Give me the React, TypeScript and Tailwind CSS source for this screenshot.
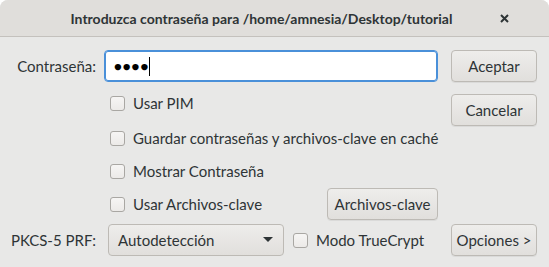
const font = { fontFamily: 'Lato, "Noto Sans", sans-serif' };

const Btn = ({ label, className = "" }: { label: string; className?: string }) => (
  <div
    className={`flex h-8 items-center justify-center whitespace-nowrap rounded-[4px] border border-[#bdbab5] bg-gradient-to-b from-[#eeedeb] to-[#e1dfdc] text-[15px] text-[#2e3436] shadow-[0_1px_0_rgba(0,0,0,0.06)] ${className}`}
  >
    {label}
  </div>
);

const Check = ({ label }: { label: string }) => (
  <div className="flex items-center gap-2 whitespace-nowrap text-[15px] text-[#2e3436]">
    <div className="h-[15px] w-[15px] shrink-0 rounded-[3px] border border-[#a9a7a3] bg-gradient-to-b from-[#f6f5f4] to-[#eceae8]" />
    <span>{label}</span>
  </div>
);

export default function App() {
  return (
    <div className="h-[267px] w-[549px] bg-white" style={font}>
      <div className="flex h-full flex-col overflow-hidden rounded-t-[8px] bg-[#e8e8e7]">
        {/* title bar */}
        <div className="relative flex h-[37px] shrink-0 items-center justify-center border-b border-[#c4c1bd] bg-[#e0dedb] pr-[26px]">
          <span className="whitespace-nowrap text-[14px] font-bold text-[#2e3436]">
            Introduzca contraseña para /home/amnesia/Desktop/tutorial
          </span>
          <svg className="absolute right-[40px] top-[14px]" width="9" height="9" viewBox="0 0 9 9">
            <path d="M1 1L8 8M8 1L1 8" stroke="#2e3436" strokeWidth="2" />
          </svg>
        </div>

        <div className="flex flex-1 gap-[13px] pl-[12px] pr-[12px] pt-[13px]">
          {/* left */}
          <div className="flex w-[426px] flex-col">
            <div className="flex items-center">
              <span className="flex w-[84px] justify-end whitespace-nowrap text-[15px] text-[#2e3436]">Contraseña:</span>
              <div className="ml-[8px] flex h-8 flex-1 items-center rounded-[4px] border border-[#4a90d9] bg-white pl-[9px] shadow-[inset_0_0_0_1px_#4a90d9]">
                <span className="text-[13px] leading-none tracking-[1px] text-black">●●●●</span>
                <span className="h-[19px] w-px bg-black" />
              </div>
            </div>

            <div className="ml-[98px] mt-[11px] flex flex-col">
              <div className="flex h-[20px] items-center">
                <Check label="Usar PIM" />
              </div>
              <div className="mt-[15px] flex h-[20px] items-center">
                <Check label="Guardar contraseñas y archivos-clave en caché" />
              </div>
              <div className="mt-[13px] flex h-[20px] items-center">
                <Check label="Mostrar Contraseña" />
              </div>
              <div className="mt-[7px] flex h-8 items-center justify-between">
                <Check label="Usar Archivos-clave" />
                <Btn label="Archivos-clave" className="w-[111px]" />
              </div>
            </div>

            <div className="mt-[4px] flex items-center">
              <span className="flex w-[84px] justify-end whitespace-nowrap text-[15px] text-[#2e3436]">PKCS-5 PRF:</span>
              <div className="ml-[12px] flex h-8 w-[176px] items-center justify-between rounded-[4px] border border-[#bdbab5] bg-gradient-to-b from-[#eeedeb] to-[#e1dfdc] pl-[9px] pr-[10px] text-[15px] text-[#2e3436]">
                <span>Autodetección</span>
                <svg width="10" height="6" viewBox="0 0 10 6">
                  <path d="M0 0H10L5 5Z" fill="#2e3436" />
                </svg>
              </div>
              <div className="ml-[9px]">
                <Check label="Modo TrueCrypt" />
              </div>
            </div>
          </div>

          {/* right */}
          <div className="flex w-[86px] flex-col">
            <Btn label="Aceptar" />
            <Btn label="Cancelar" className="mt-[12px]" />
            <Btn label="Opciones >" className="mt-[98px]" />
          </div>
        </div>
      </div>
    </div>
  );
}
